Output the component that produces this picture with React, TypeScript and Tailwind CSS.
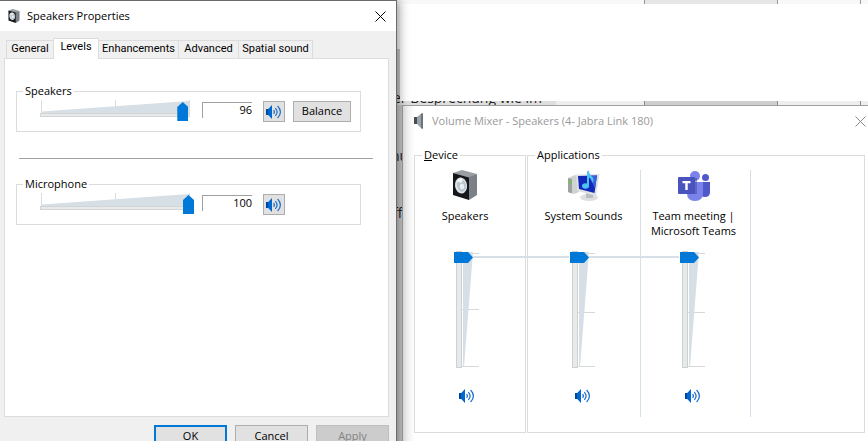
import { useState } from "react";
import type { ReactNode } from "react";

type MixerChannel = {
  name: string;
  icon: ReactNode;
  middleTick: number;
  linked: boolean;
};

function SoundWaves() {
  return (
    <svg viewBox="0 0 16 14" className="h-[14px] w-4" aria-hidden="true">
      <path d="M0 4h2.2L6 0v14L2.2 10H0z" fill="#0067d1" />
      <path d="M0 4h2v6H0z" fill="#00479c" />
      <g fill="none" stroke="#1d6fcb" strokeWidth="1.2">
        <path d="M7.6 5.2q1.6 1.8 0 3.6" />
        <path d="M9.3 3.1q3.6 3.9 0 7.8" />
        <path d="M11.6 1q5.6 6 0 12" />
      </g>
    </svg>
  );
}

function SpeakerBox({ className }: { className: string }) {
  return (
    <svg viewBox="0 0 26 30" className={className} aria-hidden="true">
      <path d="M1 3l9-3 15 4-8 4z" fill="#9a9ea3" />
      <path d="M17 7l8-3v21l-8 5z" fill="#7c8087" />
      <path d="M1 3l16 4.500V30L1 25z" fill="#15171a" />
      <ellipse cx="9" cy="15.500" rx="6" ry="8" fill="#dfe5ea" transform="rotate(-8 9 15.500)" />
      <ellipse cx="9.500" cy="15.500" rx="4.500" ry="6.300" fill="#bcc6ce" transform="rotate(-8 9 15.500)" />
      <ellipse cx="10" cy="16.500" rx="2.200" ry="2.800" fill="#e9eef2" />
      <path d="M5 11q3-4 6-1l-2 3z" fill="#f4f7f9" />
    </svg>
  );
}

function SystemSoundsIcon() {
  return (
    <svg viewBox="0 0 32 32" className="h-8 w-8" aria-hidden="true">
      <path d="M0 8l7-3 4 1v16l-5 2-6-2z" fill="#cfd2d1" />
      <path d="M0 8l4 1v14.500l-4-1.500z" fill="#9da2a1" />
      <path d="M1 10l2 .5v3l-2-.5z" fill="#5fd02c" />
      <ellipse cx="21" cy="27.500" rx="9" ry="3.500" fill="#dddfe1" />
      <path d="M18 23l7 1v4h-7z" fill="#b8bdc1" />
      <path d="M8 4.500L31.500 4l-3.500 22L9.500 21z" fill="#dfe2e4" />
      <path d="M10 6l19-.5-2.500 17.500L11 19z" fill="#1128b8" />
      <path d="M21 5.700l8-.2-2 13z" fill="#3563dd" />
      <g fill="#4bc3f5">
        <ellipse cx="17.500" cy="16" rx="3.500" ry="2.800" />
        <path d="M19 16V1.500L21 .5q0 4 3 6 3 3 0 6.500 0-4-3-5.500V16z" />
      </g>
    </svg>
  );
}

function TeamsIcon() {
  return (
    <svg viewBox="0 0 32 32" className="h-8 w-8" aria-hidden="true">
      <circle cx="27.500" cy="7.500" r="3.500" fill="#5059c9" />
      <circle cx="17" cy="6" r="5" fill="#7b83eb" />
      <path d="M22 12h10v10q0 5-5 5-5 0-5-5z" fill="#5059c9" />
      <path d="M9 12h16v11q0 8-8 8t-8-8z" fill="#7b83eb" />
      <path d="M11 8h8v16H11z" fill="#3a419b" opacity=".45" />
      <rect y="7" width="17" height="17" rx="1" fill="#4b53bc" />
      <path d="M4.500 11h8v2.300H9.700V20H7.300v-6.700H4.500z" fill="#fff" />
    </svg>
  );
}

function CloseButton({ className }: { className: string }) {
  return (
    <button type="button" aria-label="Close" className={className}>
      <svg viewBox="0 0 11 11" className="h-[11px] w-[11px]" aria-hidden="true">
        <path d="M.5.5l10 10M10.500.5l-10 10" stroke="currentColor" fill="none" />
      </svg>
    </button>
  );
}

function LevelGroup({ name, initial, balance }: { name: string; initial: number; balance?: boolean }) {
  const [level, setLevel] = useState(initial);

  return (
    <fieldset className="mr-[27px] ml-[11px] border border-[#dcdcdc] pb-[9px]">
      <legend className="ml-1.5 px-0.5 leading-4">{name}</legend>
      <div className="flex items-start gap-2 pt-0.5 pl-[23px]">
        <div className="grid h-[21px] w-[154px]">
          <svg viewBox="0 0 154 21" className="col-start-1 row-start-1 h-[21px] w-[154px] overflow-visible" aria-hidden="true">
            <path d="M1.500-1v13M75.500-1v13M149.500-1v13" stroke="#dcdcdc" />
            <path d="M2 10.500L149 0v12H2z" fill="#d6dfe6" />
            <rect x=".5" y="12.500" width="149" height="3" fill="#e7eaea" stroke="#d4d4d4" />
          </svg>
          <input
            type="range"
            aria-label={`${name} level`}
            value={level}
            onChange={(e) => setLevel(Number(e.target.value))}
            className="col-start-1 row-start-1 h-[21px] w-[154px] appearance-none bg-transparent [&::-webkit-slider-thumb]:h-[19px] [&::-webkit-slider-thumb]:w-[11px] [&::-webkit-slider-thumb]:appearance-none [&::-webkit-slider-thumb]:bg-[#0078d7] [&::-webkit-slider-thumb]:[clip-path:polygon(50%_0,100%_26%,100%_100%,0_100%,0_26%)]"
          />
        </div>
        <input
          type="text"
          aria-label={`${name} value`}
          value={level}
          onChange={(e) => setLevel(Number(e.target.value) || 0)}
          className="mt-px mr-[3px] h-4 w-[50px] border-t border-l border-[#a0a0a0] text-right outline-none"
        />
        <button
          type="button"
          aria-label={`Mute ${name}`}
          className="flex h-[21px] w-[22px] items-center justify-center border border-[#adadad] bg-[#e1e1e1]"
        >
          <SoundWaves />
        </button>
        {balance && (
          <button type="button" className="h-[21px] w-[58px] border border-[#adadad] bg-[#e1e1e1]">
            Balance
          </button>
        )}
      </div>
    </fieldset>
  );
}

const tabs = [
  { label: "General", width: "w-[48px]" },
  { label: "Levels", width: "w-[46px]" },
  { label: "Enhancements", width: "w-[81px]" },
  { label: "Advanced", width: "w-[61px]" },
  { label: "Spatial sound", width: "w-[75px]" },
];

function SpeakerProperties() {
  return (
    <section className="absolute top-0 left-0 w-[397px] border-t border-r border-[#6b6b6b] bg-[#f0f0f0] pb-3 shadow-[2px_0_10px_rgba(0,0,0,0.4)]">
      <header className="flex h-[30px] items-center bg-white pr-2.5 pl-2">
        <SpeakerBox className="h-[14px] w-3" />
        <h1 className="ml-[7px] flex-1 leading-4">Speakers Properties</h1>
        <CloseButton className="text-black" />
      </header>

      <div role="tablist" className="flex items-end pt-[7px] pl-1.5 font-['Roboto','Open_Sans',sans-serif]">
        {tabs.map((tab) => {
          const active = tab.label === "Levels";
          return (
            <button
              key={tab.label}
              type="button"
              role="tab"
              aria-selected={active}
              className={`${tab.width} -mr-px whitespace-nowrap border border-b-0 border-[#dcdcdc] ${
                active ? "relative -mb-px h-[21px] bg-white pb-1" : "h-[18px]"
              }`}
            >
              {tab.label}
            </button>
          );
        })}
      </div>

      <div className="mr-[7px] ml-1 border border-[#dcdcdc] bg-white pt-6 pb-[191px]">
        <LevelGroup name="Speakers" initial={96} balance />
        <hr className="mt-[26px] mr-[15px] mb-[17px] ml-[14px] border-[#a0a0a0]" />
        <LevelGroup name="Microphone" initial={100} />
      </div>

      <footer className="mt-2 mr-[7px] flex justify-end gap-2 leading-none">
        <button type="button" className="h-[23px] w-[73px] border-2 border-[#0078d7] bg-[#e1e1e1] pb-0.5">
          OK
        </button>
        <button type="button" className="h-[23px] w-[73px] border border-[#adadad] bg-[#e1e1e1] pb-0.5">
          Cancel
        </button>
        <button
          type="button"
          disabled
          className="h-[23px] w-[73px] border border-[#bfbfbf] bg-[#cccccc] pb-0.5 text-[#838383]"
        >
          Apply
        </button>
      </footer>
    </section>
  );
}

function Channel({ name, icon, middleTick, linked }: MixerChannel) {
  return (
    <div className="flex h-[247px] flex-col">
      <div className="flex h-8 justify-center pr-1">{icon}</div>
      <p className="mt-1.5 h-[43px] pr-1 text-center leading-[15px] whitespace-pre-line">{name}</p>
      <div className="relative ml-[39px] grid h-[117px] w-[26px]">
        {linked && <span className="absolute top-[5px] right-[27px] h-0.5 w-24 bg-[#d6dfe6]" />}
        <svg viewBox="0 0 26 117" className="col-start-1 row-start-1 h-[117px] w-[26px]" aria-hidden="true">
          <path d={`M8 2.500h17M8 ${middleTick}.5h17M8 115.500h17`} stroke="#d8d8d8" />
          <path d="M9 1h10L10 116H9z" fill="#d6dfe6" />
          <rect x="2.500" y=".5" width="5" height="116" fill="#e7eaea" stroke="#d0d0d0" />
        </svg>
        <input
          type="range"
          aria-label={`${name} volume`}
          defaultValue={100}
          className="relative z-10 col-start-1 row-start-1 mt-px h-[115px] w-[19px] appearance-none bg-transparent [direction:rtl] [writing-mode:vertical-lr] [&::-webkit-slider-thumb]:h-[11px] [&::-webkit-slider-thumb]:w-[19px] [&::-webkit-slider-thumb]:appearance-none [&::-webkit-slider-thumb]:bg-[#0078d7] [&::-webkit-slider-thumb]:[clip-path:polygon(0_0,74%_0,100%_50%,74%_100%,0_100%)]"
        />
      </div>
      <button type="button" aria-label={`Mute ${name}`} className="mt-[21px] ml-[44px] w-4">
        <SoundWaves />
      </button>
    </div>
  );
}

function VolumeMixer() {
  return (
    <section className="absolute isolate top-[105px] -right-1.5 left-[402px] border border-[#a0a0a0] bg-[linear-gradient(to_right,#e9e9e9,#fff_12px)] pb-3">
      <header className="flex h-[30px] items-center pr-[7px] pl-[11px] text-[#999]">
        <svg viewBox="0 0 10 16" className="h-4 w-2.5" aria-hidden="true">
          <path d="M0 4h3v7H0z" fill="#454c52" />
          <path d="M3 4l5-4v16L3 11z" fill="#9aa3aa" />
          <path d="M7 1l2-1v16l-2-1z" fill="#6b747b" />
        </svg>
        <h2 className="ml-2 flex-1 leading-4">Volume Mixer - Speakers (4- Jabra Link 180)</h2>
        <CloseButton className="text-[#888]" />
      </header>

      <div className="flex gap-px pt-[11px] pr-2 pl-[11px]">
        <fieldset className="w-[112px] border border-[#dcdcdc] pt-[7px] pr-1.5 pb-[15px]">
          <legend className="ml-[7px] px-0.5 leading-4">
            <span className="underline">D</span>evice
          </legend>
          <Channel name="Speakers" icon={<SpeakerBox className="h-[30px] w-[26px]" />} middleTick={58} linked={false} />
        </fieldset>
        <fieldset className="min-w-0 flex-1 border border-[#dcdcdc] pt-[7px] pb-[15px]">
          <legend className="ml-[7px] px-0.5 leading-4">Applications</legend>
          <div className="flex pl-[3px]">
            <div className="w-[110px] border-r border-[#d6dfe6]">
              <Channel name="System Sounds" icon={<SystemSoundsIcon />} middleTick={61} linked />
            </div>
            <div className="w-[110px] border-r border-[#d6dfe6]">
              <Channel name={"Team meeting |\nMicrosoft Teams"} icon={<TeamsIcon />} middleTick={61} linked />
            </div>
          </div>
        </fieldset>
      </div>
    </section>
  );
}

function Backdrop() {
  return (
    <div className="absolute inset-0 overflow-hidden bg-[#c8c8c8] text-[14px] text-[#222]">
      <div className="flex h-[49px] bg-[#f8f8f8]">
        <div className="ml-[644px] w-[134px] border-r border-l border-[#999] bg-[#e6e6e6]" />
        <div className="w-[83px] border-r border-[#999]" />
      </div>
      <div className="mt-[52px] flex h-1 bg-[#eee]">
        <div className="w-[556px] bg-[#dedede]" />
        <div className="w-[88px]" />
        <div className="w-[134px] border-r border-l border-[#888] bg-[#cecece]" />
        <div className="w-[83px] border-r border-[#888]" />
      </div>
      <p className="absolute top-[88px] left-[393px] leading-5">er Besprechung wie im</p>
      <p className="absolute top-[146px] left-[391px] leading-5">nu</p>
      <p className="absolute top-[203px] left-[393px] leading-5">ff</p>
      <div className="absolute top-1 right-0 left-[400px] h-[97px] bg-white" />
    </div>
  );
}

export default function App() {
  return (
    <main className="relative h-screen w-full overflow-hidden font-['Open_Sans','Noto_Sans',sans-serif] text-[11px] text-black">
      <Backdrop />
      <VolumeMixer />
      <SpeakerProperties />
    </main>
  );
}
